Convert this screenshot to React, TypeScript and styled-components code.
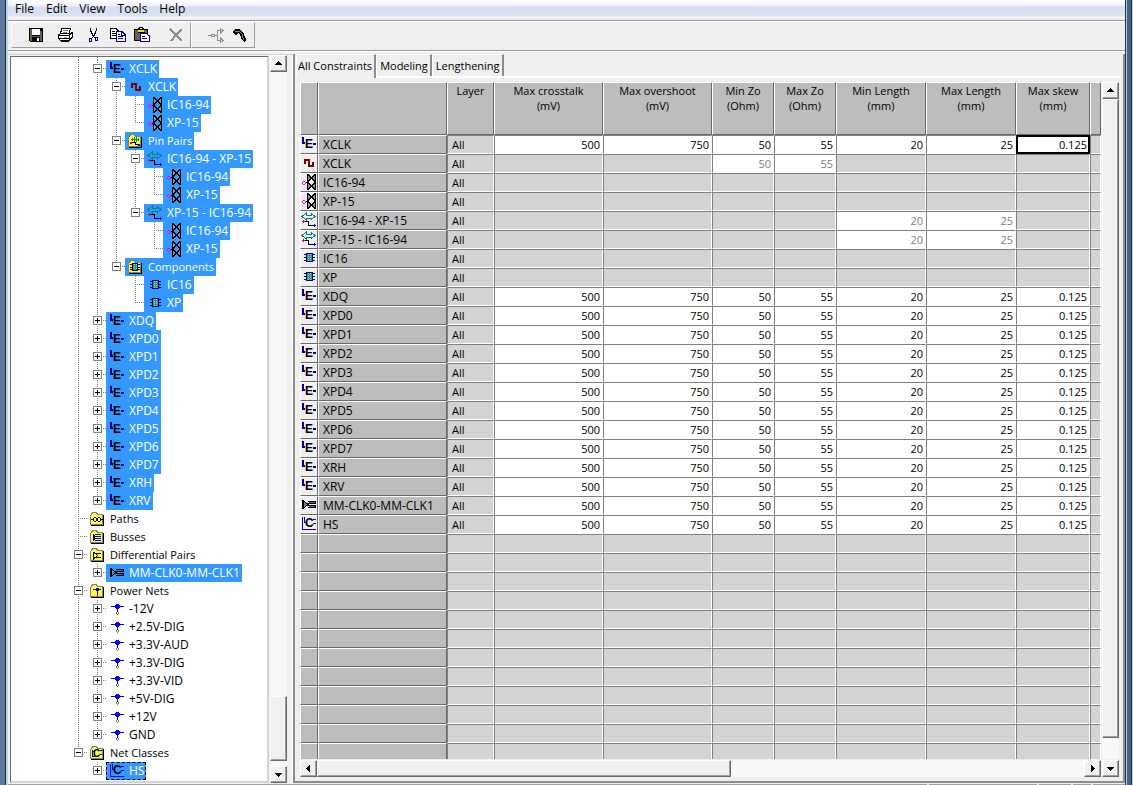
import React, { useState } from "react";
import styled, { createGlobalStyle, css } from "styled-components";

const GlobalStyle = createGlobalStyle`
  * { box-sizing: border-box; }
  html, body { margin: 0; padding: 0; }
  body, button {
    font-family: "Open Sans", "Noto Sans", sans-serif;
    font-size: 11px;
    color: #000;
  }
  button { margin: 0; padding: 0; border: 0; background: none; }
  svg { display: block; flex: none; }
`;

const dither = css`
  background: repeating-conic-gradient(#ffffff 0 25%, #f0f0f0 0 50%) 0 0 / 2px 2px;
`;

/* ---------- window frame ---------- */

const Window = styled.div`
  display: grid;
  grid-template-columns: 8px minmax(0, 1fr) 8px;
  height: 100vh;
  overflow: hidden;
  background: #efefef;
`;

const FrameEdge = styled.div<{ $side: "left" | "right" }>`
  background: ${(p) =>
    p.$side === "left"
      ? "linear-gradient(90deg, #5c789c 0 5px, #1c2f4a 5px 6px, #c3d3e6 6px 8px)"
      : "linear-gradient(90deg, #23344e 0 1px, #b7c9dd 1px 2px, #456689 2px 6px, #1c2f4a 6px 7px, #c3d3e6 7px 8px)"};
`;

const Client = styled.div`
  display: flex;
  flex-direction: column;
  min-width: 0;
  height: 100vh;
`;

const MenuBar = styled.nav`
  display: flex;
  align-items: center;
  height: 18px;
  padding-left: 1px;
  background: linear-gradient(#ffffff 0, #eef1f9 6px, #d5dcee 7px, #dde3f3 16px, #f4f5f9 17px);
`;

const MenuItem = styled.button`
  height: 18px;
  padding: 0 6px;
  line-height: 18px;
  font-size: 12px;
`;

/* ---------- toolbar ---------- */

const ToolBar = styled.div`
  display: flex;
  height: 31px;
  margin-top: 2px;
  padding: 1px 3px 2px;
  border-top: 1px solid #9c9c9c;
  border-bottom: 1px solid #9c9c9c;
  box-shadow: inset 0 1px 0 #fff, 0 1px 0 #fff;
`;

const ToolGroup = styled.div`
  display: flex;
  align-items: center;
  padding: 0 2px 0 12px;
  border: 1px solid;
  border-color: #fff #9c9c9c #9c9c9c #fff;
`;

const ToolButton = styled.button<{ $before?: number }>`
  display: flex;
  align-items: center;
  justify-content: center;
  width: 24px;
  height: 22px;
  margin-left: ${(p) => p.$before ?? 0}px;
`;

/* ---------- scroll bars ---------- */

const raised = css`
  border: 1px solid;
  border-color: #fff #696969 #696969 #fff;
  box-shadow: inset -1px -1px 0 #a0a0a0;
  background: #f0f0f0;
`;

const ScrollTrack = styled.div<{ $horizontal?: boolean }>`
  display: flex;
  flex-direction: ${(p) => (p.$horizontal ? "row" : "column")};
  ${(p) => (p.$horizontal ? "height: 17px;" : "width: 17px;")}
  ${dither}
`;

const ScrollButton = styled.button`
  ${raised}
  display: flex;
  align-items: center;
  justify-content: center;
  flex: none;
  width: 17px;
  height: 17px;
`;

const ScrollSpace = styled.div<{ $grow: number }>`
  flex: ${(p) => p.$grow} 1 0;
`;

const ScrollThumb = styled.div<{ $grow: number }>`
  ${raised}
  flex: ${(p) => p.$grow} 1 0;
`;

const arrows = {
  up: "M3 7H10V6H9V5H8V4H7V3H6V4H5V5H4V6H3Z",
  down: "M3 4H10V5H9V6H8V7H7V8H6V7H5V6H4V5H3Z",
  left: "M4 5H5V4H6V3H7V2H8V9H7V8H6V7H5V6H4Z",
  right: "M5 2H6V3H7V4H8V5H9V6H8V7H7V8H6V9H5Z",
};

function Arrow({ to }: { to: keyof typeof arrows }) {
  return (
    <svg width="13" height="11" viewBox="0 0 13 11" shapeRendering="crispEdges" aria-hidden>
      <path d={arrows[to]} />
    </svg>
  );
}

/* ---------- icons ---------- */

type IconName =
  | "net" | "wave" | "pin" | "pair" | "chip" | "diff" | "class" | "power"
  | "fPair" | "fChip" | "fPath" | "fBus" | "fDiff" | "fPower" | "fClass";

function Folder({ children }: { children: React.ReactNode }) {
  return (
    <g transform="translate(-1 0)">
      <path d="M2 14H14V4H15V15H2Z" fill="#000" />
      <path d="M1 4V14H14V3H9L8 1H3L2 3Z" fill="#808080" />
      <path d="M2 4V13H13V4H8L7 2H4L3 4Z" fill="#ffff40" />
      {children}
    </g>
  );
}

function chipShape(x: number, y: number, w: number, h: number) {
  return (
    <>
      <path
        d={`M${x - 2} ${y + 1.5}H${x + w + 2}M${x - 2} ${y + 4.5}H${x + w + 2}M${x - 2} ${y + h - 1.5}H${x + w + 2}`}
        stroke="#000090"
      />
      <rect x={x} y={y} width={w} height={h} fill="#000090" />
      <rect x={x + 1} y={y + 1} width={w - 2} height={h - 2} fill="#2e9a68" />
      <path d={`M${x + 2.5} ${y + 1}V${y + h - 1}M${x + 4.5} ${y + 1}V${y + h - 1}`} stroke="#9fd8a8" strokeDasharray="1 1" />
    </>
  );
}

function valve(y: number) {
  return (
    <>
      <path d={`M7 ${y + 1}L10.500 ${y + 4}L7 ${y + 7}ZM14 ${y + 1}L10.500 ${y + 4}L14 ${y + 7}Z`} fill="#909090" />
      <path
        d={`M6 ${y}H8V${y + 1}H9V${y + 2}H10V${y + 3}H11V${y + 2}H12V${y + 1}H13V${y}H15V${y + 8}H13V${y + 7}H12V${y + 6}H11V${y + 5}H10V${y + 6}H9V${y + 7}H8V${y + 8}H6Z
            M7 ${y + 2}V${y + 6}H8V${y + 5}H9V${y + 3}H8V${y + 2}ZM14 ${y + 2}H13V${y + 3}H12V${y + 5}H13V${y + 6}H14Z`}
        fill="#000"
        fillRule="evenodd"
      />
    </>
  );
}

const iconArt: Record<IconName, React.ReactNode> = {
  net: (
    <>
      <path d="M1 1H3V6H4V8H1ZM12 7H15V9H12Z" fill="#000090" />
      <text x="4" y="12" fontFamily="Liberation Sans, sans-serif" fontWeight="700" fontSize="12">E</text>
    </>
  ),
  wave: <path d="M4 9V5H8V11H12V7" fill="none" stroke="#800000" strokeWidth="2" />,
  pin: (
    <>
      <path d="M5 8.500H7" stroke="#000" />
      <path d="M2 7H4V8H5V10H4V11H2V10H1V8H2ZM2 8V10H4V8Z" fill="#ff00ff" fillRule="evenodd" />
      {valve(0)}
      {valve(8)}
    </>
  ),
  pair: (
    <>
      <path d="M1 4.500L5 1V3H10V1L14 4.500L10 8V6H5V8Z" fill="none" stroke="#008080" />
      <path d="M3 9.500H7.500V13.500H12" fill="none" stroke="#000" />
      <path d="M1 9H2V8H3V9H4V10H3V11H2V10H1Z" fill="#ff0000" />
      <path d="M12 13H13V12H14V13H15V14H14V15H13V14H12Z" fill="#0000ff" />
    </>
  ),
  chip: chipShape(5, 3, 7, 9),
  diff: (
    <>
      <path d="M1.500 3V12" stroke="#000" />
      <path d="M2 3.500L7 7.500L2 11.500Z" fill="#808080" stroke="#000" />
      <path d="M7 4.500H14M7 6.500H15M7 8.500H14M7 10.500H15M14.500 4V7M14.500 8V11" stroke="#000" />
      <path d="M8 5.500H14M8 9.500H14" stroke="#6060a0" />
    </>
  ),
  class: (
    <>
      <path d="M1.500 1V13.500H15M3.500 1V6.500H5.500M12 3.500H15M12 7.500H15" fill="none" stroke="#0000e0" />
      <text x="4" y="11" fontFamily="Liberation Sans, sans-serif" fontWeight="700" fontSize="12">C</text>
    </>
  ),
  power: (
    <>
      <path d="M2 5H15V6H2ZM8 6H9V11H8ZM7 3H10V4H11V7H10V8H7V7H6V4H7Z" fill="#0000ff" />
      <path d="M7 11H8V13H7ZM9 11H10V13H9ZM8 13H9V14H8Z" fill="#808000" />
    </>
  ),
  fPair: (
    <Folder>
      <path d="M4 6.500H12M5 5V8M11 5V8M7 4V9M9 4V9" stroke="#008080" fill="none" />
      <path d="M5 9.500H8V11.500H11" stroke="#000" fill="none" />
      <rect x="3" y="9" width="2" height="2" fill="#ff0000" />
      <rect x="11" y="11" width="2" height="2" fill="#0000ff" />
    </Folder>
  ),
  fChip: <Folder>{chipShape(5, 4, 6, 8)}</Folder>,
  fPath: (
    <Folder>
      <path d="M2 8.500H4M7 8.500H9M12 8.500H14" stroke="#000" />
      <path d="M5 6H7V7H8V10H7V11H5V10H4V7H5ZM5 7V10H7V7ZM9 6H11V7H12V10H11V11H9V10H8V7H9ZM9 7V10H11V7Z" fill="#000" fillRule="evenodd" />
    </Folder>
  ),
  fBus: (
    <Folder>
      <path d="M4.500 5V12M5.500 6V11" stroke="#000090" />
      <path d="M6 5.500H12M6 7.500H12M6 9.500H12M6 11.500H12" stroke="#0000ff" />
    </Folder>
  ),
  fDiff: (
    <Folder>
      <path d="M4.500 5V12L8.500 8.500L4.500 5M7 6.500H12M7 10.500H12" fill="none" stroke="#000" />
    </Folder>
  ),
  fPower: (
    <Folder>
      <path d="M4 6H12V7H4ZM7 5H10V8H7ZM8 8H9V10H8Z" fill="#0000c0" />
      <rect x="8" y="10" width="1" height="3" fill="#800000" />
    </Folder>
  ),
  fClass: (
    <Folder>
      <path d="M3.500 5V12M3 6.500H5M3 11.500H6M11 5.500H13M11 9.500H13" fill="none" stroke="#0000e0" />
      <text x="4" y="12" fontFamily="Liberation Sans, sans-serif" fontWeight="700" fontSize="10">C</text>
    </Folder>
  ),
};

function Icon({ name }: { name: IconName }) {
  return (
    <svg width="16" height="16" viewBox="0 0 16 16" shapeRendering="crispEdges" aria-hidden>
      {iconArt[name]}
    </svg>
  );
}

const toolArt = {
  Save: (
    <>
      <path d="M1 1H15V15H2L1 14Z" fill="#000" />
      <path d="M2 2H4V9H2ZM12 4H14V14H12ZM2 9H14V10H2ZM2 10H4V14H2Z" fill="#6b5f4a" />
      <path d="M4 2H12V8H4Z" fill="#fff" />
      <path d="M9 11H11V14H9Z" fill="#fff" />
    </>
  ),
  Print: (
    <>
      <path d="M5 1.500H13.500L12 6H3.500Z" fill="#fff" stroke="#000" />
      <path d="M6 3.500H11M5.500 5H10" stroke="#808080" />
      <path d="M1.500 7.500L4 6.500H12L15.500 5.500V10L12 13.500H3.500L1.500 11.500Z" fill="#fff" stroke="#000" />
      <path d="M1.500 8.500H12L15 6M2 11.500H12M12 9V13.500M4 14.500H12" stroke="#000" fill="none" />
      <path d="M7 10H10" stroke="#c0b000" />
    </>
  ),
  Cut: (
    <>
      <path d="M4 1H5V4H6V6H7V8H8V6H9V4H10V1H11V4H10V7H9V9H6V7H5V5H4Z" fill="#000" />
      <path d="M7 9H8V10H7ZM6 10H7V11H6ZM8 10H9V11H8Z" fill="#0000a0" />
      <path d="M3.500 11.500H5.500V14.500H3.500ZM9.500 10.500H11.500V13.500H9.500Z" fill="none" stroke="#0000a0" />
    </>
  ),
  Copy: (
    <>
      <path d="M.5 1.500H6L8.500 4V11.500H.5Z" fill="#fff" stroke="#000" />
      <path d="M2 4.500H5M2 6.500H6M2 8.500H6" stroke="#000" />
      <path d="M6.500 4.500H12L15.500 8V14.500H6.500Z" fill="#fff" stroke="#0000a0" />
      <path d="M11.500 5V8.500H15M8 7.500H10M8 9.500H13M8 11.500H13" stroke="#0000a0" fill="none" />
    </>
  ),
  Paste: (
    <>
      <path d="M.5 2.500H13.500V13.500H.5Z" fill="#6b6455" stroke="#000" />
      <path d="M4 3H10V5H4Z" fill="#e8e000" />
      <path d="M3.500 5.500H10.500M4 2.500L6 .5H8L10 2.500" stroke="#000" fill="none" />
      <path d="M6.500 6.500H12L15.500 9V14.500H6.500Z" fill="#fff" stroke="#0000a0" />
      <path d="M8 9.500H11M8 11.500H13" stroke="#0000a0" />
    </>
  ),
  Delete: <path d="M2 2L14 14M14 2.500L8 8L3 14" stroke="#8c8c8c" strokeWidth="2" fill="none" />,
  Route: (
    <>
      <path d="M0 8.500H3M6 8.500H9M9.500 3.500V13.500M9 3.500H12M9 13.500H12" stroke="#909090" fill="none" />
      <path d="M3.500 7.500H6.500V9.500H3.500ZM12.500 1.500L15 3.500L12.500 6ZM12.500 11L15 13.500L12.500 15.500Z" stroke="#909090" fill="none" />
    </>
  ),
  Phone: (
    <>
      <path d="M1 4L3 2H7L10 4L12 7L13 10L14 12V13L12 15L9 12L9 10L8 7L6 6L5 8L3 8L1 6Z" fill="#000" />
      <path d="M3 4L7 4L10 7L11 11L12 13" stroke="#808080" fill="none" />
    </>
  ),
};

function ToolIcon({ name }: { name: keyof typeof toolArt }) {
  return (
    <svg width="16" height="16" viewBox="0 0 16 16" shapeRendering="crispEdges" aria-hidden>
      {toolArt[name]}
    </svg>
  );
}

/* ---------- tree ---------- */

const Workspace = styled.div`
  display: flex;
  flex: 1 1 0;
  min-height: 0;
  margin-top: 3px;
`;

const TreePane = styled.aside`
  display: flex;
  flex: none;
  width: 285px;
  padding: 0 5px 0 2px;
  border-top: 1px solid #d4d4d4;
  border-right: 1px solid #fff;
`;

const TreeBox = styled.div`
  flex: 1;
  min-width: 0;
  margin-top: 1px;
  overflow: hidden;
  border: 1px solid #696969;
  border-right: 2px solid #d4d4d4;
  border-bottom: 2px solid #d4d4d4;
  background: #fff;
`;

const TreeScroll = styled(ScrollTrack)`
  margin-left: 1px;
`;

const TreeRow = styled.div<{ $short?: boolean }>`
  display: flex;
  height: ${(p) => (p.$short ? 3 : 18)}px;
  padding-left: 57px;
`;

type Guide = "none" | "line" | "tee" | "end";

const dotV = "repeating-linear-gradient(180deg, #808080 0 1px, transparent 1px 2px)";
const dotH = "repeating-linear-gradient(90deg, #808080 0 1px, transparent 1px 2px)";

const GuideCell = styled.div<{ $guide: Guide }>`
  flex: none;
  width: 19px;
  padding: 4px 0 0 6px;
  background-repeat: no-repeat;
  ${(p) =>
    p.$guide === "line" &&
    css`
      background-image: ${dotV};
      background-position: 10px 0;
      background-size: 1px 100%;
    `}
  ${(p) =>
    (p.$guide === "tee" || p.$guide === "end") &&
    css`
      background-image: ${dotV}, ${dotH};
      background-position: 10px 0, 10px 8px;
      background-size: 1px ${p.$guide === "tee" ? "100%" : "9px"}, 9px 1px;
    `}
`;

const Expander = styled.button`
  display: block;
  width: 9px;
  height: 9px;
  border: 1px solid #808080;
  background: #fff;
`;

const TreeLabel = styled.div<{ $selected?: boolean; $focused?: boolean; $folder?: boolean }>`
  display: flex;
  align-items: center;
  gap: 4px;
  height: 18px;
  padding: 0 2px 0 3px;
  font-size: ${(p) => (p.$folder ? 11 : 12)}px;
  line-height: 18px;
  white-space: nowrap;
  color: ${(p) => (p.$selected ? "#fff" : "#000")};
  background: ${(p) => (p.$selected ? "#3399ff" : "transparent")};
  ${(p) => p.$focused && "outline: 1px dashed #000; outline-offset: -1px;"}
`;

interface Node {
  label: string;
  icon: IconName;
  open?: boolean;
  sel?: boolean;
  kids?: Node[];
  more?: boolean;
}

const n = (icon: IconName, label: string, sel = true): Node => ({ icon, label, sel });
const pinKids = () => [n("pin", "IC16-94"), n("pin", "XP-15")];
const plainNets = ["XDQ", "XPD0", "XPD1", "XPD2", "XPD3", "XPD4", "XPD5", "XPD6", "XPD7", "XRH", "XRV"];

const netBranch: Node[] = [
  {
    ...n("net", "XCLK"),
    open: true,
    kids: [
      { ...n("wave", "XCLK"), open: true, kids: pinKids() },
      {
        ...n("fPair", "Pin Pairs"),
        open: true,
        kids: [
          { ...n("pair", "IC16-94 - XP-15"), open: true, kids: pinKids() },
          { ...n("pair", "XP-15 - IC16-94"), open: true, kids: pinKids() },
        ],
      },
      { ...n("fChip", "Components"), open: true, kids: [n("chip", "IC16"), n("chip", "XP")] },
    ],
  },
  ...plainNets.map((l) => ({ ...n("net", l), more: true })),
];

const folders: Node[] = [
  n("fPath", "Paths", false),
  n("fBus", "Busses", false),
  { ...n("fDiff", "Differential Pairs", false), open: true, kids: [{ ...n("diff", "MM-CLK0-MM-CLK1"), more: true }] },
  {
    ...n("fPower", "Power Nets", false),
    open: true,
    kids: ["-12V", "+2.5V-DIG", "+3.3V-AUD", "+3.3V-DIG", "+3.3V-VID", "+5V-DIG", "+12V", "GND"].map((l) => ({
      ...n("power", l, false),
      more: true,
    })),
  },
  { ...n("fClass", "Net Classes", false), open: true, kids: [{ ...n("class", "HS"), more: true }] },
];

function Branch({ nodes, trail }: { nodes: Node[]; trail: Guide[] }) {
  return (
    <>
      {nodes.map((node, i) => {
        const last = i === nodes.length - 1;
        return (
          <React.Fragment key={i}>
            <TreeRow role="treeitem" aria-level={trail.length + 1} aria-selected={!!node.sel}>
              {trail.map((g, k) => (
                <GuideCell key={k} $guide={g} />
              ))}
              <GuideCell $guide={last ? "end" : "tee"}>
                {(node.open || node.more) && (
                  <Expander aria-label={(node.open ? "Collapse " : "Expand ") + node.label}>
                    <svg width="7" height="7" viewBox="0 0 7 7" shapeRendering="crispEdges" aria-hidden>
                      <path d={node.open ? "M1 3H6V4H1Z" : "M1 3H3V1H4V3H6V4H4V6H3V4H1Z"} />
                    </svg>
                  </Expander>
                )}
              </GuideCell>
              <TreeLabel $selected={node.sel} $focused={node.label === "HS"} $folder={node.icon.startsWith("f")}>
                <Icon name={node.icon} />
                {node.label}
              </TreeLabel>
            </TreeRow>
            {node.kids && <Branch nodes={node.kids} trail={[...trail, last ? "none" : "line"]} />}
          </React.Fragment>
        );
      })}
    </>
  );
}

/* ---------- constraint grid ---------- */

const GridPane = styled.main`
  display: flex;
  flex-direction: column;
  flex: 1 1 0;
  min-width: 0;
  border: solid #8c8c8c;
  border-width: 0 2px 2px 2px;
  padding: 0 4px 4px 0;
`;

const TabStrip = styled.div`
  display: flex;
  flex: none;
  height: 24px;
  margin: 0 0 4px 1px;
  border-bottom: 2px solid #fff;
`;

const Tab = styled.button<{ $active?: boolean }>`
  display: flex;
  height: ${(p) => (p.$active ? 24 : 22)}px;
  padding: 2px 2px 0 1px;
  line-height: 18px;
  font-size: 11px;
  background: #efefef;
  border: solid;
  border-width: 1px 2px 0 1px;
  border-color: #fff #8c8c8c #fff #fff;
  & + & { padding: 2px 2px 0 3px; }
`;

const GridArea = styled.div`
  display: grid;
  grid-template-columns: minmax(0, 1fr) 17px;
  grid-template-rows: minmax(0, 1fr) 17px;
  column-gap: 1px;
  row-gap: 1px;
  flex: 1 1 0;
  min-height: 0;
  margin-left: 5px;
`;

const TableClip = styled.div`
  overflow: hidden;
`;

const Grid = styled.table`
  width: 100%;
  table-layout: fixed;
  border-collapse: separate;
  border-spacing: 0;
`;

const headFace = css`
  background: #bdbdbd;
  font-weight: 400;
  border: 1px solid;
  border-color: #fff #696969 #696969 #fff;
`;

const HeadCell = styled.th`
  ${headFace}
  height: 53px;
  padding: 0;
  vertical-align: top;
  text-align: center;
  line-height: 15px;
  white-space: pre-line;
`;

const IconCell = styled.td<{ $filled: boolean }>`
  ${headFace}
  height: 19px;
  padding: 0;
  vertical-align: top;
  ${(p) => p.$filled && "background: #efefef;"}
`;

const NameCell = styled.th`
  ${headFace}
  height: 19px;
  padding: 1px 0 0 4px;
  font-size: 12px;
  line-height: 16px;
  text-align: left;
  vertical-align: top;
  white-space: nowrap;
`;

const DataCell = styled.td<{ $kind?: "open" | "inherited" | "locked"; $current?: boolean; $left?: boolean }>`
  height: 19px;
  padding: ${(p) => (p.$left ? "1px 0 0 4px" : "1px 2px 0 0")};
  line-height: 16px;
  vertical-align: top;
  text-align: ${(p) => (p.$left ? "left" : "right")};
  border: 1px solid;
  border-color: #808080 #fff #fff #808080;
  background: ${(p) => (p.$kind === "open" || p.$kind === "inherited" ? "#fff" : "#d3d3d3")};
  color: ${(p) => (p.$kind === "inherited" ? "#808080" : "#000")};
  ${(p) => p.$current && "border-color: #000; box-shadow: inset 0 0 0 1px #000;"}
`;

const columns = [
  ["Layer", 47],
  ["Max crosstalk\n(mV)", 109],
  ["Max overshoot\n(mV)", 109],
  ["Min Zo\n(Ohm)", 62],
  ["Max Zo\n(Ohm)", 62],
  ["Min Length\n(mm)", 90],
  ["Max Length\n(mm)", 90],
  ["Max skew\n(mm)", 74],
] as const;

interface Row {
  icon: IconName;
  name: string;
  values: string[];
  inherited?: boolean;
}

const full = ["500", "750", "50", "55", "20", "25", "0.125"];
const blank = ["", "", "", "", "", "", ""];
const zoOnly = ["", "", "50", "55", "", "", ""];
const lengthOnly = ["", "", "", "", "20", "25", ""];

const rows: Row[] = [
  { icon: "net", name: "XCLK", values: full },
  { icon: "wave", name: "XCLK", values: zoOnly, inherited: true },
  { icon: "pin", name: "IC16-94", values: blank },
  { icon: "pin", name: "XP-15", values: blank },
  { icon: "pair", name: "IC16-94 - XP-15", values: lengthOnly, inherited: true },
  { icon: "pair", name: "XP-15 - IC16-94", values: lengthOnly, inherited: true },
  { icon: "chip", name: "IC16", values: blank },
  { icon: "chip", name: "XP", values: blank },
  ...plainNets.map((name): Row => ({ icon: "net", name, values: full })),
  { icon: "diff", name: "MM-CLK0-MM-CLK1", values: full },
  { icon: "class", name: "HS", values: full },
];

const emptyRows = 12;

const StatusBar = styled.footer`
  display: flex;
  flex: none;
  gap: 2px;
  height: 2px;
  padding-top: 1px;
`;

const StatusPart = styled.div<{ $width?: number }>`
  flex: ${(p) => (p.$width ? `0 0 ${p.$width}px` : "1")};
  background: #a0a0a0;
`;

const tabs = ["All Constraints", "Modeling", "Lengthening"];

export default function App() {
  const [tab, setTab] = useState(0);
  return (
    <>
      <GlobalStyle />
      <Window>
        <FrameEdge $side="left" />
        <Client>
          <MenuBar>
            {["File", "Edit", "View", "Tools", "Help"].map((m) => (
              <MenuItem key={m}>{m}</MenuItem>
            ))}
          </MenuBar>
          <ToolBar role="toolbar">
            <ToolGroup>
              <ToolButton aria-label="Save"><ToolIcon name="Save" /></ToolButton>
              <ToolButton aria-label="Print" $before={5}><ToolIcon name="Print" /></ToolButton>
              <ToolButton aria-label="Cut" $before={5}><ToolIcon name="Cut" /></ToolButton>
              <ToolButton aria-label="Copy"><ToolIcon name="Copy" /></ToolButton>
              <ToolButton aria-label="Paste"><ToolIcon name="Paste" /></ToolButton>
              <ToolButton aria-label="Delete" $before={10}><ToolIcon name="Delete" /></ToolButton>
            </ToolGroup>
            <ToolGroup>
              <ToolButton aria-label="Route"><ToolIcon name="Route" /></ToolButton>
              <ToolButton aria-label="Phone"><ToolIcon name="Phone" /></ToolButton>
            </ToolGroup>
          </ToolBar>
          <Workspace>
            <TreePane>
              <TreeBox role="tree">
                <TreeRow $short>
                  <GuideCell $guide="line" />
                  <GuideCell $guide="line" />
                </TreeRow>
                <Branch nodes={netBranch} trail={["line"]} />
                <Branch nodes={folders} trail={[]} />
              </TreeBox>
              <TreeScroll>
                <ScrollButton aria-label="Scroll up"><Arrow to="up" /></ScrollButton>
                <ScrollSpace $grow={627} />
                <ScrollThumb $grow={63} />
                <ScrollSpace $grow={5} />
                <ScrollButton aria-label="Scroll down"><Arrow to="down" /></ScrollButton>
              </TreeScroll>
            </TreePane>
            <GridPane>
              <TabStrip role="tablist">
                {tabs.map((t, i) => (
                  <Tab key={t} role="tab" aria-selected={tab === i} $active={tab === i} onClick={() => setTab(i)}>
                    {t}
                  </Tab>
                ))}
              </TabStrip>
              <GridArea>
                <TableClip>
                  <Grid>
                    <colgroup>
                      <col width="18" />
                      <col width="129" />
                      {columns.map(([label, width]) => (
                        <col key={label} width={width} />
                      ))}
                      <col />
                    </colgroup>
                    <thead>
                      <tr>
                        <HeadCell />
                        <HeadCell />
                        {columns.map(([label]) => (
                          <HeadCell key={label} scope="col">{label}</HeadCell>
                        ))}
                        <HeadCell />
                      </tr>
                    </thead>
                    <tbody>
                      {rows.map((row, r) => (
                        <tr key={r}>
                          <IconCell $filled><Icon name={row.icon} /></IconCell>
                          <NameCell scope="row">{row.name}</NameCell>
                          <DataCell $left>All</DataCell>
                          {row.values.map((v, c) => (
                            <DataCell
                              key={c}
                              $kind={v ? (row.inherited ? "inherited" : "open") : "locked"}
                              $current={r === 0 && c === 6}
                            >
                              {v}
                            </DataCell>
                          ))}
                          <DataCell />
                        </tr>
                      ))}
                      {Array.from({ length: emptyRows }, (_, r) => (
                        <tr key={"e" + r}>
                          <IconCell $filled={false} />
                          <NameCell />
                          {Array.from({ length: 9 }, (_, c) => (
                            <DataCell key={c} />
                          ))}
                        </tr>
                      ))}
                    </tbody>
                  </Grid>
                </TableClip>
                <ScrollTrack>
                  <ScrollButton aria-label="Scroll rows up"><Arrow to="up" /></ScrollButton>
                  <ScrollThumb $grow={640} />
                  <ScrollSpace $grow={21} />
                </ScrollTrack>
                <ScrollTrack $horizontal>
                  <ScrollButton aria-label="Scroll columns left"><Arrow to="left" /></ScrollButton>
                  <ScrollThumb $grow={414} />
                  <ScrollSpace $grow={354} />
                  <ScrollButton aria-label="Scroll columns right"><Arrow to="right" /></ScrollButton>
                </ScrollTrack>
                <ScrollButton aria-label="Scroll rows down"><Arrow to="down" /></ScrollButton>
              </GridArea>
            </GridPane>
          </Workspace>
          <StatusBar>
            <StatusPart />
            <StatusPart $width={108} />
            <StatusPart $width={32} />
            <StatusPart $width={18} />
            <StatusPart $width={32} />
          </StatusBar>
        </Client>
        <FrameEdge $side="right" />
      </Window>
    </>
  );
}
